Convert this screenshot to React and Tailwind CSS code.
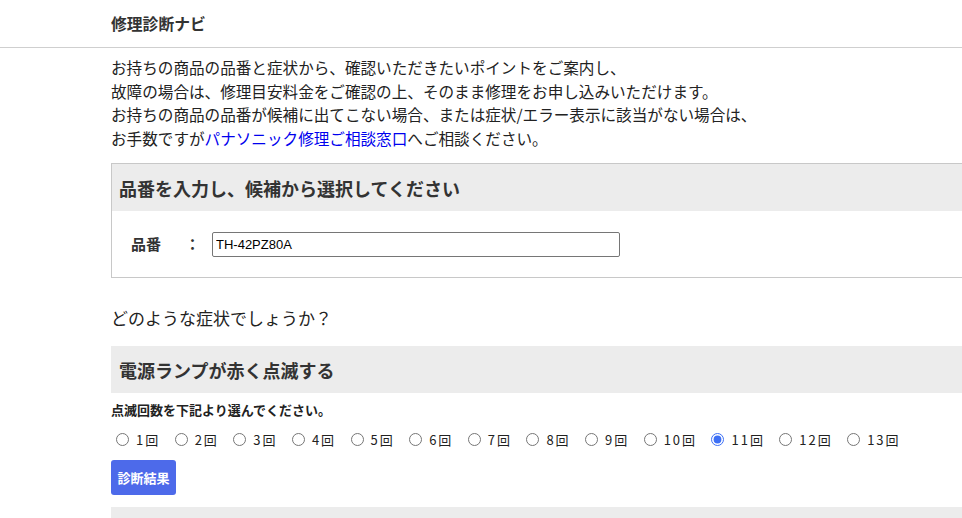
import React from "react";

const nums = [1, 2, 3, 4, 5, 6, 7, 8, 9, 10, 11, 12, 13];

export default function App() {
  return (
    <div
      className="w-full min-h-[518px] overflow-hidden bg-white text-[#222]"
      style={{ fontFamily: '"Noto Sans CJK JP", "Noto Sans", sans-serif' }}
    >
      <header className="h-[48px] border-b border-[#cfcfcf] flex items-center pl-[111px]">
        <h1 className="text-[15.8px] font-bold text-[#333] leading-none">修理診断ナビ</h1>
      </header>

      <main className="pl-[111px]">
        <p className="mt-[8px] text-[15.6px] leading-[23.5px] text-[#222] whitespace-nowrap">
          お持ちの商品の品番と症状から、確認いただきたいポイントをご案内し、
          <br />
          故障の場合は、修理目安料金をご確認の上、そのまま修理をお申し込みいただけます。
          <br />
          お持ちの商品の品番が候補に出てこない場合、または症状/エラー表示に該当がない場合は、
          <br />
          お手数ですが
          <a href="#" className="text-[#0000ee]">パナソニック修理ご相談窓口</a>
          へご相談ください。
        </p>

        <section className="mt-[13px] w-[900px] border border-[#c8c8c8]">
          <div className="h-[47px] bg-[#ececec] flex items-center pl-[7px]">
            <h2 className="text-[18px] font-bold text-[#333] leading-none">
              品番を入力し、候補から選択してください
            </h2>
          </div>
          <div className="h-[66px] flex items-center pl-[19px]">
            <span className="text-[15px] font-bold text-[#333] w-[81px] whitespace-nowrap">
              品番<span className="ml-[24px]">：</span>
            </span>
            <input
              type="text"
              defaultValue="TH-42PZ80A"
              className="w-[408px] h-[25px] border border-[#767676] rounded-[2px] px-[3px] text-[13px] text-black outline-none"
              style={{ fontFamily: '"Liberation Sans", Arial, sans-serif' }}
            />
          </div>
        </section>

        <div className="mt-[28px] text-[17px] leading-[24px] text-[#222]">
          どのような症状でしょうか？
        </div>

        <div className="mt-[16px] w-[900px] h-[47px] bg-[#ececec] flex items-center pl-[8px]">
          <h3 className="text-[18px] font-bold text-[#333] leading-none">電源ランプが赤く点滅する</h3>
        </div>

        <div className="mt-[7px] text-[13px] font-bold leading-[20px] text-[#222]">
          点滅回数を下記より選んでください。
        </div>

        <div className="mt-[9px] h-[20px] flex items-center">
          {nums.map((n, i) => (
            <label
              key={n}
              className={`flex items-center text-[13px] leading-none text-[#222] ${i === 0 ? "" : "ml-[9.4px]"}`}
            >
              <input
                type="radio"
                name="count"
                defaultChecked={n === 11}
                className="w-[13px] h-[13px] m-0 ml-[5px] mr-[7px] accent-[#3d6ff5]"
              />
              <span className="tracking-[2px] whitespace-nowrap">{n}回</span>
            </label>
          ))}
        </div>

        <button
          type="button"
          className="mt-[11px] w-[65px] h-[35px] rounded-[3px] bg-[#4d6aea] text-white text-[13px] font-bold flex items-center justify-center"
        >
          診断結果
        </button>

        <div className="mt-[12px] w-[900px] h-[60px] bg-[#ececec]" />
      </main>
    </div>
  );
}
